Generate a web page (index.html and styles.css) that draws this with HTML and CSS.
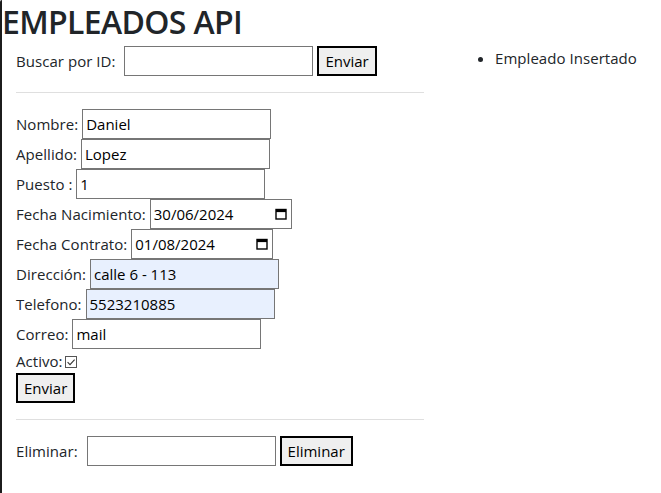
FILE: index.html
```html
<!DOCTYPE html>
<html lang="es">
<head>
<meta charset="utf-8">
<title>Empleados API</title>
<link rel="stylesheet" href="styles.css">
</head>
<body>
<div class="frame"></div>
<h1 class="title">EMPLEADOS API</h1>
<div class="layout">
  <div class="main">
    <form class="inline-form">
      <label class="lbl-gap">Buscar por ID:</label> <input class="field" type="text"> <button class="btn" type="button">Enviar</button>
    </form>
    <hr class="sep">
    <form class="emp-form">
      <label>Nombre:</label> <input class="field" type="text" value="Daniel"><br>
      <label>Apellido:</label> <input class="field" type="text" value="Lopez"><br>
      <label>Puesto :</label> <input class="field" type="text" value="1"><br>
      <label>Fecha Nacimiento:</label> <span class="date"><input class="date-text" type="text" value="30/06/2024"><svg class="cal" viewBox="0 0 12 12" width="12" height="12"><rect x="1" y="1.5" width="10" height="9.5" fill="none" stroke="#000" stroke-width="1.4"/><rect x="1" y="1.5" width="10" height="2.6" fill="#000"/></svg></span><br>
      <label>Fecha Contrato:</label> <span class="date"><input class="date-text" type="text" value="01/08/2024"><svg class="cal" viewBox="0 0 12 12" width="12" height="12"><rect x="1" y="1.5" width="10" height="9.5" fill="none" stroke="#000" stroke-width="1.4"/><rect x="1" y="1.5" width="10" height="2.6" fill="#000"/></svg></span><br>
      <label>Dirección:</label> <input class="field autofill" type="text" value="calle 6 - 113"><br>
      <label>Telefono:</label> <input class="field autofill" type="text" value="5523210885"><br>
      <label>Correo:</label> <input class="field" type="text" value="mail"><br>
      <label>Activo:</label><span class="check"><svg viewBox="0 0 12 12" width="12" height="12"><rect x="0.5" y="0.5" width="11" height="11" fill="#fff" stroke="#555"/><polyline points="2.6,6.2 5,8.6 9.6,3.6" fill="none" stroke="#333" stroke-width="1.1"/></svg></span><br>
      <button class="btn" type="button">Enviar</button>
    </form>
    <hr class="sep">
    <form class="inline-form">
      <label class="lbl-gap2">Eliminar:</label> <input class="field" type="text"> <button class="btn" type="button">Eliminar</button>
    </form>
  </div>
  <ul class="messages">
    <li>Empleado Insertado</li>
  </ul>
</div>
</body>
</html>
```

FILE: styles.css
```css
html, body {
  margin: 0;
  padding: 0;
  background: #fff;
}

body {
  font-family: "Open Sans", "Noto Sans", sans-serif;
  font-size: 15px;
  line-height: 24px;
  letter-spacing: 0.05px;
  color: #212529;
}

.frame {
  position: fixed;
  left: 0;
  top: 0;
  bottom: 0;
  width: 2px;
  background: #1c1c1c;
  border-top-left-radius: 2px;
}

.title {
  margin: 0 0 2px 0;
  padding-left: 2px;
  font-size: 32px;
  line-height: 44px;
  font-weight: 600;
  color: #212529;
  letter-spacing: -0.65px;
}

.layout {
  display: grid;
  grid-template-columns: 424px 1fr;
}

.main {
  padding-left: 16px;
}

.inline-form {
  margin: 0;
  line-height: 30px;
}

.emp-form {
  margin: 0;
}

.lbl-gap {
  margin-right: 5px;
}

.lbl-gap2 {
  margin-right: 5px;
}

.field {
  box-sizing: border-box;
  width: 189px;
  height: 30px;
  margin: 0;
  padding: 2px 3px;
  border: 1px solid #767676;
  font: inherit;
  font-size: 15px;
  line-height: 24px;
  color: #000;
  background: #fff;
  vertical-align: baseline;
}

.autofill {
  background: #e8f0fe;
}

.date {
  box-sizing: border-box;
  display: inline-flex;
  align-items: center;
  width: 142px;
  height: 30px;
  border: 1px solid #767676;
  padding: 2px 4px 2px 3px;
  vertical-align: baseline;
  background: #fff;
}

.date-text {
  flex: 1;
  min-width: 0;
  border: 0;
  padding: 0;
  margin: 0;
  font: inherit;
  line-height: 24px;
  color: #000;
  background: transparent;
}

.cal {
  display: block;
  flex: none;
}

.check {
  display: inline-block;
  margin-left: 2px;
  vertical-align: -1px;
}

.check svg {
  display: block;
}

.btn {
  box-sizing: border-box;
  height: 30px;
  margin: 0;
  padding: 1px 6px;
  border: 2px solid #000;
  border-radius: 0;
  background: #efefef;
  font: inherit;
  line-height: 24px;
  color: #000;
  vertical-align: baseline;
}

.sep {
  margin: 16px 0;
  border: 0;
  border-top: 1px solid #dfdfdf;
  height: 0;
}

.messages {
  margin: 0 0 0 39px;
  padding-left: 32px;
}
```
